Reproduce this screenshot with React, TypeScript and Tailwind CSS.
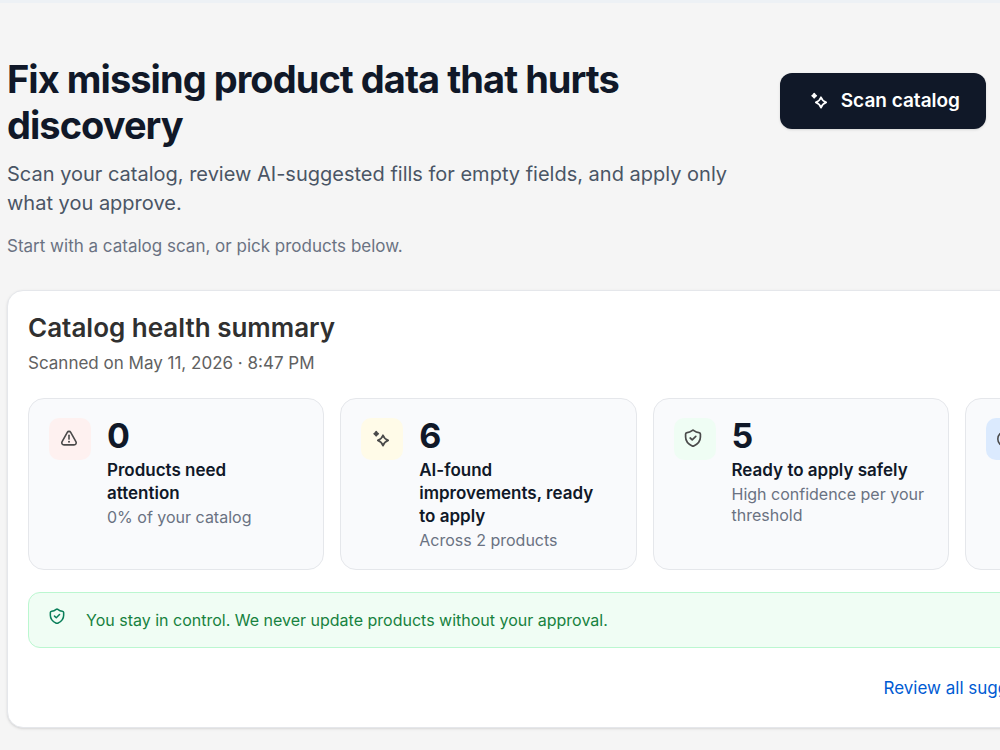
import type { ReactNode } from "react";

type IconProps = { className?: string };

function MagicIcon({ className }: IconProps) {
  return (
    <svg viewBox="0 0 20 20" fill="none" aria-hidden="true" className={className}>
      <path
        d="M5.200 2.500 6.200 3.700 7.400 4.700 6.200 5.700 5.200 6.900 4.200 5.700 3 4.700 4.200 3.700Z"
        fill="currentColor"
        stroke="currentColor"
        strokeWidth="1.4"
        strokeLinejoin="round"
      />
      <path
        d="M12 6.200c1 2.900 2.300 4.200 5.200 5.200-2.900 1-4.200 2.300-5.200 5.200-1-2.900-2.300-4.200-5.200-5.200 2.900-1 4.200-2.300 5.200-5.200Z"
        stroke="currentColor"
        strokeWidth="1.7"
        strokeLinejoin="round"
      />
    </svg>
  );
}

function AlertIcon({ className }: IconProps) {
  return (
    <svg viewBox="0 0 20 20" fill="none" aria-hidden="true" className={className}>
      <path
        d="M8.300 3.300c.7-1.300 2.700-1.300 3.400 0l5.200 9.300c.9 1.700-.1 3.300-1.900 3.300H5c-1.800 0-2.800-1.600-1.900-3.300l5.200-9.300Z"
        stroke="currentColor"
        strokeWidth="1.6"
        strokeLinejoin="round"
      />
      <path d="M10 6.200v3.900" stroke="currentColor" strokeWidth="1.6" strokeLinecap="round" />
      <circle cx="10" cy="12.800" r="1" fill="currentColor" />
    </svg>
  );
}

function ShieldIcon({ className }: IconProps) {
  return (
    <svg viewBox="0 0 20 20" fill="none" aria-hidden="true" className={className}>
      <path
        d="M9.100 1.600c.5-.4 1.300-.4 1.800 0 1.500 1.200 3.200 1.900 5 2 .8.100 1.500.7 1.500 1.500v2.900c0 3.800-2.500 7-6.600 8.900-.5.200-1.100.2-1.600 0-4.100-1.900-6.600-5.100-6.600-8.900V5.100c0-.8.7-1.400 1.500-1.500 1.800-.1 3.500-.8 5-2Z"
        stroke="currentColor"
        strokeWidth="1.7"
        strokeLinejoin="round"
      />
      <path
        d="m7.200 9 2 1.800 3.600-3.500"
        stroke="currentColor"
        strokeWidth="1.7"
        strokeLinecap="round"
        strokeLinejoin="round"
      />
    </svg>
  );
}

function ClockIcon({ className }: IconProps) {
  return (
    <svg viewBox="0 0 20 20" fill="none" aria-hidden="true" className={className}>
      <circle cx="10" cy="10" r="7.200" stroke="currentColor" strokeWidth="1.6" />
      <path d="M10 6v4l2.500 2" stroke="currentColor" strokeWidth="1.6" strokeLinecap="round" />
    </svg>
  );
}

type StatCardProps = {
  icon: ReactNode;
  tint: string;
  value?: string;
  label?: string;
  note?: string;
};

function StatCard({ icon, tint, value, label, note }: StatCardProps) {
  return (
    <div className="flex items-start gap-4 rounded-2xl border border-gray-200 bg-[#f9fafc] pt-[19px] pr-[22px] pb-[18px] pl-5">
      <div
        className={`flex size-[42px] shrink-0 items-center justify-center rounded-[10px] pr-[3px] text-[#4a4a4a] ${tint}`}
      >
        {icon}
      </div>
      <div className="min-w-0">
        <p className="text-[34px] leading-9 font-bold">{value}</p>
        <h3 className="mt-[5px] text-[17px] leading-[23px] font-semibold">{label}</h3>
        <p className="mt-[2px] text-base leading-[21px] text-gray-500">{note}</p>
      </div>
    </div>
  );
}

export default function App() {
  return (
    <div className="min-h-screen overflow-hidden border-t-[3px] border-[#edf1f5] bg-[#f5f5f5] px-[7px] pb-[22px] font-['Inter','Liberation_Sans',sans-serif] text-gray-900">
      <header className="flex items-start justify-between pt-[53px] pr-[7px]">
        <div className="max-w-[740px]">
          <h1 className="text-[38px] leading-[46px] font-bold tracking-tight">
            Fix missing product data that hurts discovery
          </h1>
          <p className="mt-3 text-xl leading-[29px] text-gray-600">
            Scan your catalog, review AI-suggested fills for empty fields, and
            apply only what you approve.
          </p>
          <p className="mt-4 text-[17px] leading-6 text-gray-500">
            Start with a catalog scan, or pick products below.
          </p>
        </div>
        <button
          type="button"
          className="mt-[17px] flex h-14 shrink-0 items-center gap-3 rounded-xl bg-gray-900 pr-[26px] pl-[29px] text-[19px] font-semibold text-white shadow-sm"
        >
          <MagicIcon className="size-5" />
          Scan catalog
        </button>
      </header>

      <section className="mt-8 min-w-[1275px] rounded-2xl border border-gray-200 bg-white px-5 pt-5 pb-[27px] shadow-sm">
        <h2 className="text-[26px] leading-[34px] font-semibold text-[#303030]">
          Catalog health summary
        </h2>
        <p className="mt-[6px] text-[17px] leading-6 text-[#616161]">
          Scanned on May 11, 2026 · 8:47 PM
        </p>

        <div className="mt-[23px] grid grid-cols-4 gap-4">
          <StatCard
            icon={<AlertIcon className="size-5" />}
            tint="bg-[#fef1f0]"
            value="0"
            label="Products need attention"
            note="0% of your catalog"
          />
          <StatCard
            icon={<MagicIcon className="size-5" />}
            tint="bg-[#fffbe8]"
            value="6"
            label="AI-found improvements, ready to apply"
            note="Across 2 products"
          />
          <StatCard
            icon={<ShieldIcon className="size-5" />}
            tint="bg-[#effdf4]"
            value="5"
            label="Ready to apply safely"
            note="High confidence per your threshold"
          />
          <StatCard
            icon={<ClockIcon className="size-5" />}
            tint="bg-blue-100"
          />
        </div>

        <div className="mt-[22px] flex items-start gap-5 rounded-xl border border-[#bbf7d0] bg-[#f0fdf4] px-[19px] py-[15px]">
          <ShieldIcon className="size-[18px] text-[#0a7f5a]" />
          <p className="text-base leading-6 text-[#178240]">
            You stay in control. We never update products without your approval.
          </p>
        </div>

        <div className="mt-7 flex justify-end pr-[195px]">
          <a href="#suggestions" className="text-[17px] leading-6 text-[#005bd3]">
            Review all suggestions
          </a>
        </div>
      </section>
    </div>
  );
}
